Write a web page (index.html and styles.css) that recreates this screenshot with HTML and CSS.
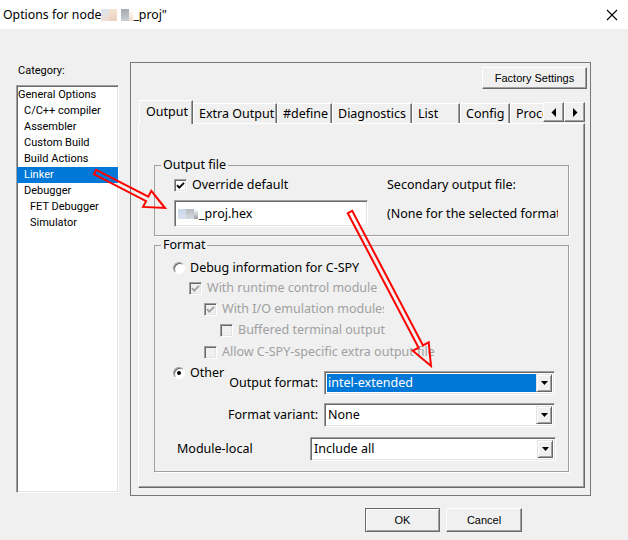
FILE: index.html
```html
<!DOCTYPE html>
<html lang="en">
<head>
  <meta charset="UTF-8">
  <title>Options for node</title>
  <link rel="stylesheet" href="styles.css">
</head>
<body>

  <div class="titlebar">
    <div class="title">Options for node<span class="blur blur-a"></span><span class="blur blur-b"></span><span class="blur blur-c"></span><span class="blur blur-d"></span><span class="blur blur-e"></span>_proj"</div>
    <svg class="close" width="12" height="12" viewBox="0 0 12 12">
      <path d="M1 1 L11 11 M11 1 L1 11" stroke="#000" stroke-width="1.1" fill="none"/>
    </svg>
  </div>

  <div class="dialog">
    <div class="category">
      <div class="cat-label">Category:</div>
      <ul class="cat-list">
        <li>General Options</li>
        <li class="lvl1">C/C++ compiler</li>
        <li class="lvl1">Assembler</li>
        <li class="lvl1">Custom Build</li>
        <li class="lvl1">Build Actions</li>
        <li class="lvl1 selected">Linker</li>
        <li class="lvl1">Debugger</li>
        <li class="lvl2">FET Debugger</li>
        <li class="lvl2">Simulator</li>
      </ul>
    </div>

    <div class="panel">
      <div class="panel-top">
        <button class="win-btn factory">Factory Settings</button>
      </div>

      <div class="tabs">
        <div class="tab-strip">
          <div class="tab active tab-output">Output</div>
          <div class="tab tab-extra">Extra Output</div>
          <div class="tab tab-define">#define</div>
          <div class="tab tab-diag">Diagnostics</div>
          <div class="tab tab-list">List</div>
          <div class="tab tab-config">Config</div>
          <div class="tab tab-proc">Processing</div>
        </div>
        <div class="tab-scroll">
          <div class="scroll-btn">
            <svg width="6" height="9" viewBox="0 0 6 9"><polygon points="5,0 5,9 0.5,4.5" fill="#000"/></svg>
          </div>
          <div class="scroll-btn">
            <svg width="6" height="9" viewBox="0 0 6 9"><polygon points="1,0 1,9 5.5,4.5" fill="#000"/></svg>
          </div>
        </div>
      </div>

      <div class="tab-page">
        <fieldset class="group group-output">
          <legend>Output file</legend>
          <div class="output-body">
            <div class="check-row">
              <span class="checkbox">
                <svg width="11" height="11" viewBox="0 0 11 11"><polyline points="2,5.2 4.3,7.6 9,2.8" stroke="#000" stroke-width="1.8" fill="none"/></svg>
              </span>
              Override default
            </div>
            <div class="side-text">Secondary output file:</div>
            <div class="textbox"><span class="blur blur-f"></span><span class="blur blur-g"></span><span class="blur blur-h"></span>_proj.hex</div>
            <div class="side-text">(None for the selected format)</div>
          </div>
        </fieldset>

        <fieldset class="group group-format">
          <legend>Format</legend>
          <div class="format-body">
            <div class="check-row">
              <span class="radio"></span>
              Debug information for C-SPY
            </div>
            <div class="check-row disabled lvl-a">
              <span class="checkbox">
                <svg width="11" height="11" viewBox="0 0 11 11"><polyline points="2,5.2 4.3,7.6 9,2.8" stroke="#a0a0a0" stroke-width="1.8" fill="none"/></svg>
              </span>
              <span class="clip clip-runtime">With runtime control modules</span>
            </div>
            <div class="check-row disabled lvl-b">
              <span class="checkbox">
                <svg width="11" height="11" viewBox="0 0 11 11"><polyline points="2,5.2 4.3,7.6 9,2.8" stroke="#a0a0a0" stroke-width="1.8" fill="none"/></svg>
              </span>
              <span class="clip clip-io">With I/O emulation modules</span>
            </div>
            <div class="check-row disabled lvl-c">
              <span class="checkbox"></span>
              Buffered terminal output
            </div>
            <div class="check-row disabled lvl-b gap-6">
              <span class="checkbox"></span>
              Allow C-SPY-specific extra output file
            </div>

            <div class="other">
              <div class="check-row other-radio">
                <span class="radio on"></span>
                Other
              </div>
              <div class="fmt-grid">
                <span class="fmt-label">Output format:</span>
                <div class="combo">
                  <span class="combo-value selected">intel-extended</span>
                  <span class="combo-btn">
                    <svg width="7" height="4" viewBox="0 0 7 4"><polygon points="0,0 7,0 3.5,4" fill="#000"/></svg>
                  </span>
                </div>
                <span class="fmt-label">Format variant:</span>
                <div class="combo">
                  <span class="combo-value">None</span>
                  <span class="combo-btn">
                    <svg width="7" height="4" viewBox="0 0 7 4"><polygon points="0,0 7,0 3.5,4" fill="#000"/></svg>
                  </span>
                </div>
              </div>
            </div>

            <div class="module-row">
              <span class="module-label">Module-local</span>
              <div class="combo combo-wide">
                <span class="combo-value">Include all</span>
                <span class="combo-btn">
                  <svg width="7" height="4" viewBox="0 0 7 4"><polygon points="0,0 7,0 3.5,4" fill="#000"/></svg>
                </span>
              </div>
            </div>
          </div>
        </fieldset>
      </div>
    </div>
  </div>

  <div class="footer">
    <button class="win-btn default-btn">OK</button>
    <button class="win-btn cancel-btn">Cancel</button>
  </div>

  <!-- red annotation arrows drawn over the dialog -->
  <svg class="arrows" width="628" height="540" viewBox="0 0 628 540">
    <polygon points="93.9,174.2 146.1,201.1 143.1,206.9 165,208 151.3,190.9 148.3,196.7 96.1,169.8"
             fill="none" stroke="#ff0000" stroke-width="2" stroke-linejoin="miter"/>
    <polygon points="347.8,213.2 418.6,347.7 412.8,350.7 431,366 428.7,342.3 423,345.4 352.2,210.8"
             fill="none" stroke="#ff0000" stroke-width="2" stroke-linejoin="miter"/>
  </svg>

</body>
</html>
```

FILE: styles.css
```css
* {
  box-sizing: border-box;
}

body {
  margin: 0;
  width: 628px;
  height: 540px;
  overflow: hidden;
  position: relative;
  background-color: #f0f0f0;
  font-family: "Noto Sans", sans-serif;
  font-size: 12.5px;
  line-height: 16px;
  color: #000;
}

/* title bar */

.titlebar {
  height: 29px;
  background-color: #fff;
  display: flex;
  align-items: center;
  justify-content: space-between;
  padding: 0 10px 0 3px;
}

.title {
  font-size: 12.3px;
  white-space: nowrap;
}

.blur {
  display: inline-block;
  height: 12px;
  vertical-align: -2px;
}

.blur-a { width: 8px; background: linear-gradient(#dbe6f0, #f0ddd2); }
.blur-b { width: 8px; background: linear-gradient(#f7e4d2, #e9d0c0); }
.blur-c { width: 4px; }
.blur-d { width: 8px; background: linear-gradient(#a6aab2, #c9cdd3); }
.blur-e { width: 4px; background: linear-gradient(#fff, #f3dcc8); }

.blur-f { width: 8px; height: 10px; vertical-align: -1px; background: linear-gradient(#c6d6ea, #d8e2ee); }
.blur-g { width: 8px; height: 10px; vertical-align: -1px; background: linear-gradient(#b6bac2, #d6dae0); }
.blur-h { width: 4px; height: 10px; vertical-align: -1px; background: linear-gradient(#fff, #9a9ea6); margin-right: 1px; }

/* layout */

.dialog {
  display: flex;
  margin-top: 33px;
  padding-left: 16px;
}

.category {
  width: 103px;
}

.cat-label {
  font-family: Roboto, sans-serif;
  font-size: 11px;
  margin-top: 1px;
  padding-left: 2px;
}

.cat-list {
  list-style: none;
  margin: 6px 0 0;
  padding: 1px 0 0;
  width: 103px;
  height: 408px;
  background-color: #fff;
  border: 1px solid;
  border-color: #a0a0a0 #fff #fff #a0a0a0;
  box-shadow: inset 1px 1px #696969, inset -1px -1px #e3e3e3;
  font-family: Roboto, sans-serif;
  font-size: 11px;
}

.cat-list li {
  height: 16px;
  line-height: 16px;
  padding-left: 1px;
  white-space: nowrap;
}

.cat-list li.lvl1 { padding-left: 7px; }
.cat-list li.lvl2 { padding-left: 13px; }

.cat-list li.selected {
  background-color: #0078d7;
  color: #fff;
}

.panel {
  margin-left: 11px;
  width: 461px;
  height: 434px;
  border: 1px solid #787878;
  padding: 4px 3px 0 7px;
}

.panel-top {
  display: flex;
  justify-content: flex-end;
}

.win-btn {
  height: 22px;
  padding: 0;
  font-family: "Liberation Sans", sans-serif;
  font-size: 11px;
  color: #000;
  background-color: #f0f0f0;
  border: 1px solid;
  border-color: #fff #696969 #696969 #fff;
  box-shadow: inset -1px -1px #a0a0a0;
}

.factory {
  width: 105px;
}

/* tabs */

.tabs {
  display: flex;
  align-items: flex-end;
  height: 23px;
  margin-top: 11px;
  margin-left: 1px;
}

.tab-strip {
  display: flex;
  align-items: flex-end;
  width: 404px;
  height: 24px;
  margin-bottom: -1px;
  overflow: hidden;
  position: relative;
  z-index: 1;
}

.tab {
  flex: none;
  height: 20px;
  margin-bottom: 1px;
  padding: 1px 0 0 5px;
  line-height: 17px;
  white-space: nowrap;
  overflow: hidden;
  background-color: #f0f0f0;
  border-top: 1px solid #fff;
  border-left: 1px solid #fff;
  border-right: 1px solid #696969;
  box-shadow: inset -1px 0 #a0a0a0;
}

.tab.active {
  height: 24px;
  margin-bottom: 0;
  padding: 2px 0 0 6px;
}

.tab-output { width: 54px; }
.tab-extra { width: 84px; }
.tab-define { width: 55px; }
.tab-diag { width: 80px; }
.tab-list { width: 48px; }
.tab-config { width: 50px; }
.tab-proc { width: 60px; }

.tab-scroll {
  display: flex;
  margin-bottom: 1px;
  position: relative;
  z-index: 2;
}

.scroll-btn {
  width: 21px;
  height: 20px;
  display: flex;
  align-items: center;
  justify-content: center;
  background-color: #f0f0f0;
  border: 1px solid;
  border-color: #fff #696969 #696969 #fff;
  box-shadow: inset -1px -1px #a0a0a0;
}

.tab-page {
  width: 447px;
  height: 365px;
  padding-left: 15px;
  border: 1px solid;
  border-color: #fff #696969 #696969 #fff;
  box-shadow: inset -1px -1px #a0a0a0;
}

/* group boxes */

.group {
  margin: 0;
  padding: 0;
  width: 415px;
  min-width: 0;
  border: 1px solid #a0a0a0;
  box-shadow: 1px 1px #fff;
}

.group legend {
  margin-left: 6px;
  padding: 0 2px;
  line-height: 16px;
}

.group-output {
  margin-top: 33px;
}

.group-format {
  margin-top: 1px;
}

.output-body {
  display: grid;
  grid-template-columns: 194px 171px;
  grid-template-rows: 16px 27px;
  column-gap: 19px;
  row-gap: 7px;
  align-items: center;
  padding: 4px 0 8px 19px;
}

.side-text {
  white-space: nowrap;
  overflow: hidden;
}

.check-row {
  display: flex;
  align-items: center;
  gap: 5px;
  height: 16px;
  white-space: nowrap;
}

.checkbox {
  flex: none;
  width: 13px;
  height: 13px;
  display: flex;
  align-items: center;
  justify-content: center;
  background-color: #fff;
  border: 1px solid;
  border-color: #a0a0a0 #fff #fff #a0a0a0;
  box-shadow: inset 1px 1px #696969, inset -1px -1px #e3e3e3;
}

.disabled {
  color: #a0a0a0;
}

.disabled .checkbox {
  background-color: #f0f0f0;
}

.radio {
  flex: none;
  width: 12px;
  height: 12px;
  border-radius: 50%;
  display: flex;
  align-items: center;
  justify-content: center;
  background-color: #fff;
  border: 1px solid;
  border-color: #a0a0a0 #fff #fff #a0a0a0;
  box-shadow: inset 1px 1px #696969;
}

.radio.on::after {
  content: "";
  width: 4px;
  height: 4px;
  border-radius: 50%;
  background-color: #000;
}

.textbox {
  height: 27px;
  line-height: 25px;
  padding-left: 3px;
  background-color: #fff;
  border: 1px solid;
  border-color: #a0a0a0 #fff #fff #a0a0a0;
  box-shadow: inset 1px 1px #696969, inset -1px -1px #e3e3e3;
  white-space: nowrap;
}

.format-body {
  padding: 7px 0 10px 18px;
}

.lvl-a { margin-top: 4px; padding-left: 16px; }
.lvl-b { margin-top: 5px; padding-left: 31px; }
.lvl-c { margin-top: 5px; padding-left: 47px; }
.lvl-b.gap-6 { margin-top: 6px; }

.clip {
  overflow: hidden;
}

.clip-runtime { width: 170px; }
.clip-io { width: 162px; }

.other {
  display: flex;
  margin-top: 5px;
}

.other-radio {
  width: 55px;
  align-self: flex-start;
}

.fmt-grid {
  display: grid;
  grid-template-columns: 90px 231px;
  column-gap: 6px;
  row-gap: 8px;
  align-items: center;
  margin-top: 6px;
}

.fmt-label {
  text-align: right;
  white-space: nowrap;
}

.combo {
  display: flex;
  height: 24px;
  padding: 2px;
  background-color: #fff;
  border: 1px solid;
  border-color: #a0a0a0 #fff #fff #a0a0a0;
  box-shadow: inset 1px 1px #696969, inset -1px -1px #e3e3e3;
}

.combo-wide {
  width: 246px;
}

.combo-value {
  flex: 1;
  padding-left: 1px;
  line-height: 18px;
  white-space: nowrap;
}

.combo-value.selected {
  background-color: #0078d7;
  color: #fff;
}

.combo-btn {
  flex: none;
  width: 16px;
  display: flex;
  align-items: center;
  justify-content: center;
  background-color: #f0f0f0;
  border: 1px solid;
  border-color: #e3e3e3 #696969 #696969 #e3e3e3;
  box-shadow: inset 1px 1px #fff, inset -1px -1px #a0a0a0;
}

.module-row {
  display: flex;
  align-items: center;
  margin-top: 10px;
}

.module-label {
  width: 137px;
  padding-left: 4px;
}

/* bottom buttons */

.footer {
  display: flex;
  gap: 6px;
  margin-top: 12px;
  padding-left: 365px;
}

.footer .win-btn {
  height: 24px;
}

.default-btn {
  width: 75px;
  border-color: #696969;
  box-shadow: inset 1px 1px #fff, inset -1px -1px #a0a0a0;
}

.cancel-btn {
  width: 76px;
}

.arrows {
  position: absolute;
  top: 0;
  left: 0;
  pointer-events: none;
}
```
